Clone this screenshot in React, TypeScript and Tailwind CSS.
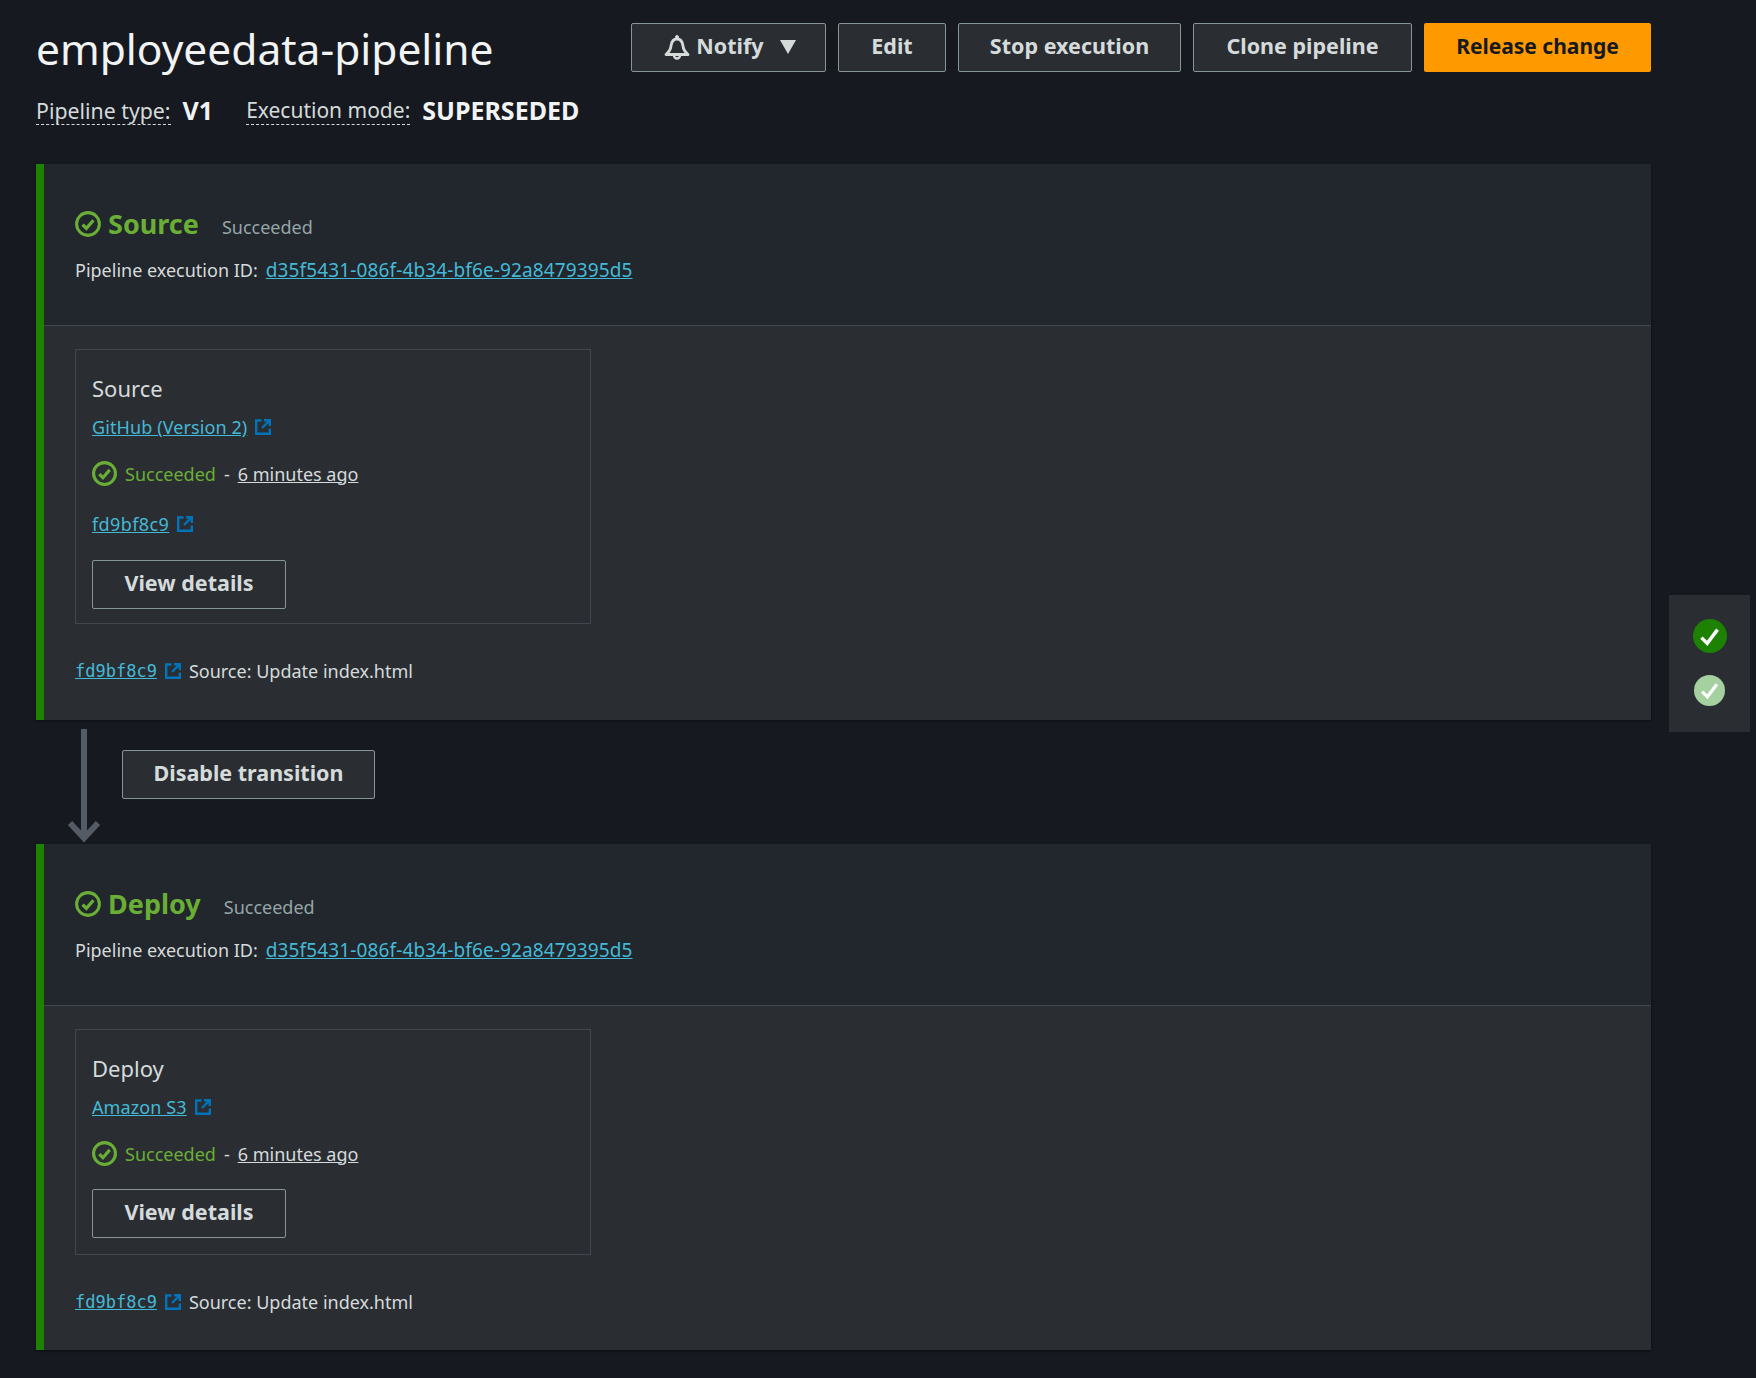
const FONT = "font-['Noto_Sans',sans-serif]";

function Bell() {
  return (
    <svg width="26" height="26" viewBox="0 0 26 26" fill="none" stroke="#d5dbdb" strokeWidth="2.8" strokeLinejoin="round" className="shrink-0">
      <path d="M2 20.500c3-2.500 4.500-4 5-8.500 .5-4 2.500-7 6-7s5.500 3 6 7c.5 4.500 2 6 5 8.500z" />
      <circle cx="13" cy="3" r="1.500" fill="#d5dbdb" strokeWidth="1" />
      <path d="M10 21.500a3 3 0 0 0 6 0" strokeWidth="2.400" />
    </svg>
  );
}

function ExternalIcon() {
  return (
    <svg width="16" height="16" viewBox="0 0 16 16" fill="none" stroke="#0073bb" strokeWidth="2.4" className="shrink-0">
      <path d="M6.500 1.500H1.200v13.300h13.600V9.500" />
      <path d="M9 1.200h5.800V7M14.800 1.200 7 9" />
    </svg>
  );
}

function StatusCheck({ size, width }: { size: number; width: number }) {
  return (
    <svg width={size} height={size} viewBox="0 0 24 24" fill="none" stroke="#6aaf35" strokeWidth={width} className="shrink-0">
      <circle cx="12" cy="12" r="10.500" />
      <path d="M7 12.500l3.500 3.500 6.500-7.500" strokeWidth="3" />
    </svg>
  );
}

function Button({ children, className = "" }: any) {
  return (
    <button className={"flex h-[49px] items-center justify-center rounded-[2px] border border-[#879596] bg-[#2a2e33] pb-[2px] text-[21.500px] font-bold text-[#d5dbdb] " + className}>
      {children}
    </button>
  );
}

function StagePanel({ name, withCommit, cardClass, bodyClass }: any) {
  return (
    <section className="flex border-l-[8px] border-[#1d8102] bg-[#2a2e33] shadow-[0_1px_2px_#0b0d11]">
      <div className="flex-1">
        <div className="h-[162px] border-b border-[#414750] bg-[#22262d] pl-[31px] pt-[45px]">
          <div className="flex h-[30px] items-center">
            <StatusCheck size={26} width={2.8} />
            <h2 className="ml-[7px] text-[27px] font-bold text-[#6aaf35]">{name}</h2>
            <span className="ml-[23px] mt-[7px] text-[18px] text-[#95a5a6]">Succeeded</span>
          </div>
          <p className="mt-[19px] flex gap-[8px] text-[18px] leading-[24px] text-[#d5dbdb]">
            Pipeline execution ID:
            <a className="text-[19px] tracking-[0.13px] text-[#44b9d6] underline">d35f5431-086f-4b34-bf6e-92a8479395d5</a>
          </p>
        </div>
        <div className={"pl-[31px] pt-[23px] " + bodyClass}>
          <div className={"w-[516px] border border-[#414750] pl-[16px] pt-[24px] " + cardClass}>
            <h3 className="text-[22px] leading-[28px] text-[#d5dbdb]">{name}</h3>
            <div className="mt-[13px] flex items-center gap-[8px] text-[18px] leading-[24px]">
              <a className="tracking-[0.1px] text-[#44b9d6] underline">{name === "Source" ? "GitHub (Version 2)" : "Amazon S3"}</a>
              <ExternalIcon />
            </div>
            <div className="mt-[22px] flex items-center text-[18px] leading-[24px] text-[#d5dbdb]">
              <StatusCheck size={25} width={3} />
              <span className="ml-[8px] text-[#6aaf35]">Succeeded</span>
              <span className="mx-[8px]">-</span>
              <span className="underline">6 minutes ago</span>
            </div>
            {withCommit && (
              <div className="mt-[26px] flex items-center gap-[8px] text-[18px] leading-[24px]">
                <a className="tracking-[0.4px] text-[#44b9d6] underline">fd9bf8c9</a>
                <ExternalIcon />
              </div>
            )}
            <Button className={"w-[194px] bg-transparent " + (withCommit ? "mt-[24px]" : "mt-[23px]")}>View details</Button>
          </div>
          <div className="mt-[35px] flex items-center text-[18px] leading-[24px] text-[#d5dbdb]">
            <a className="font-['DejaVu_Sans_Mono',monospace] text-[17px] text-[#44b9d6] underline">fd9bf8c9</a>
            <span className="ml-[8px]"><ExternalIcon /></span>
            <span className="ml-[8px]">Source: Update index.html</span>
          </div>
        </div>
      </div>
    </section>
  );
}

export default function App() {
  return (
    <div className={"flex min-h-[1378px] bg-[#161920] pl-[36px] " + FONT}>
      <main className="w-[1615px] shrink-0">
        <header className="flex h-[164px] items-start justify-between">
          <div className="pt-[21px]">
            <h1 className="text-[42.500px] leading-[56px] text-[#f2f3f3]">employeedata-pipeline</h1>
            <div className="mt-[20px] flex items-center text-[21.300px] leading-[27px] text-[#d5dbdb]">
              <span className="border-b border-dashed border-[#d5dbdb]">Pipeline type:</span>
              <strong className="ml-[12px] -translate-y-px text-[25px] text-[#f2f3f3]">V1</strong>
              <span className="ml-[33px] border-b border-dashed border-[#d5dbdb] text-[21px]">Execution mode:</span>
              <strong className="ml-[12px] -translate-y-px text-[25px] text-[#f2f3f3]">SUPERSEDED</strong>
            </div>
          </div>
          <div className="flex gap-[12px] pt-[23px]">
            <Button className="w-[195px] gap-[6px] pl-[3px]">
              <Bell />
              Notify
              <span className="ml-[10px] h-0 w-0 border-x-[8.500px] border-t-[14px] border-x-transparent border-t-[#d5dbdb]"></span>
            </Button>
            <Button className="w-[108px]">Edit</Button>
            <Button className="w-[223px]">Stop execution</Button>
            <Button className="w-[219px]">Clone pipeline</Button>
            <button className="h-[49px] w-[227px] rounded-[2px] bg-[#ff9900] pb-[2px] text-[21px] font-bold text-[#16191f]">Release change</button>
          </div>
        </header>
        <StagePanel name="Source" withCommit cardClass="h-[275px]" bodyClass="pb-[37px]" />
        <div className="flex h-[124px] items-start pl-[31px] pt-[9px]">
          <svg width="34" height="114" viewBox="0 0 34 114" fill="none" stroke="#545b64" strokeWidth="6">
            <path d="M17 0v110" />
            <path d="M3 94l14 15 14-15" />
          </svg>
          <Button className="ml-[21px] mt-[21px] w-[253px]">Disable transition</Button>
        </div>
        <StagePanel name="Deploy" cardClass="h-[226px]" bodyClass="pb-[36px]" />
      </main>
      <aside className="ml-[18px] mt-[595px] flex h-[137px] w-[81px] flex-col items-center bg-[#2a2e33] pt-[24px]">
        <span className="flex h-[34px] w-[34px] items-center justify-center rounded-full bg-[#1d8102]">
          <svg width="23" height="23" viewBox="0 0 20 20" fill="none" stroke="#fff" strokeWidth="3"><path d="M3 11l5 5 9-12" /></svg>
        </span>
        <span className="mt-[22px] flex h-[31px] w-[31px] items-center justify-center rounded-full bg-[#a5d1a0]">
          <svg width="21" height="21" viewBox="0 0 20 20" fill="none" stroke="#fff" strokeWidth="3"><path d="M3 11l5 5 9-12" /></svg>
        </span>
      </aside>
    </div>
  );
}
